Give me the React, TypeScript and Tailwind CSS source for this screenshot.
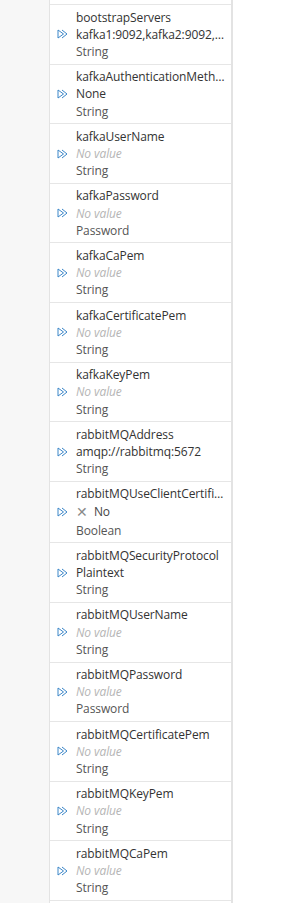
const rows: { name: string; value?: string; type: string; bool?: boolean }[] = [
  { name: 'bootstrapServers', value: 'kafka1:9092,kafka2:9092,kafka3:9092', type: 'String' },
  { name: 'kafkaAuthenticationMethod', value: 'None', type: 'String' },
  { name: 'kafkaUserName', type: 'String' },
  { name: 'kafkaPassword', type: 'Password' },
  { name: 'kafkaCaPem', type: 'String' },
  { name: 'kafkaCertificatePem', type: 'String' },
  { name: 'kafkaKeyPem', type: 'String' },
  { name: 'rabbitMQAddress', value: 'amqp://rabbitmq:5672', type: 'String' },
  { name: 'rabbitMQUseClientCertificate', value: 'No', type: 'Boolean', bool: true },
  { name: 'rabbitMQSecurityProtocol', value: 'Plaintext', type: 'String' },
  { name: 'rabbitMQUserName', type: 'String' },
  { name: 'rabbitMQPassword', type: 'Password' },
  { name: 'rabbitMQCertificatePem', type: 'String' },
  { name: 'rabbitMQKeyPem', type: 'String' },
  { name: 'rabbitMQCaPem', type: 'String' },
];

function InputIcon() {
  return (
    <svg width="11" height="10" viewBox="0 0 11 10" className="shrink-0">
      <path d="M1 1 L6.5 5 L1 9 Z" fill="none" stroke="#3b86c8" strokeWidth="1" strokeLinejoin="round" />
      <path d="M5 1 L10 5 L5 9" fill="none" stroke="#3b86c8" strokeWidth="1" strokeLinejoin="round" />
    </svg>
  );
}

function Row({ name, value, type, bool }: (typeof rows)[number]) {
  return (
    <div className="flex items-center border-b border-[#e6e6e6] pl-[7px] pr-[5px] py-[3.5px]">
      <div className="w-[19px] flex items-center">
        <InputIcon />
      </div>
      <div className="flex-1 min-w-0 text-[12px] tracking-[-0.1px] leading-[17.2px] text-[#333]">
        <div className="truncate">{name}</div>
        {bool ? (
          <div className="flex items-center gap-[6px] h-[19px] text-[#444]">
            <span className="text-[#8a8a8a] text-[14px] leading-none">✕</span>
            <span>{value}</span>
          </div>
        ) : value ? (
          <div className="truncate">{value}</div>
        ) : (
          <div className="truncate italic text-[#b5b5b5]">No value</div>
        )}
        <div className="truncate text-[#555]">{type}</div>
      </div>
    </div>
  );
}

export default function App() {
  return (
    <div className="h-[903px] w-[293px] flex overflow-hidden bg-white" style={{ fontFamily: '"Open Sans", "Noto Sans", sans-serif' }}>
      <div className="w-[49px] bg-[#f7f7f7]" />
      <div className="w-[184px] bg-white border-l border-r-2 border-[#e3e3e3] flex flex-col">
        <div className="h-[5px] shrink-0 border-b border-[#e6e6e6]" />
        {rows.map((r) => (
          <Row key={r.name} {...r} />
        ))}
      </div>
      <div className="flex-1 bg-white" />
    </div>
  );
}
